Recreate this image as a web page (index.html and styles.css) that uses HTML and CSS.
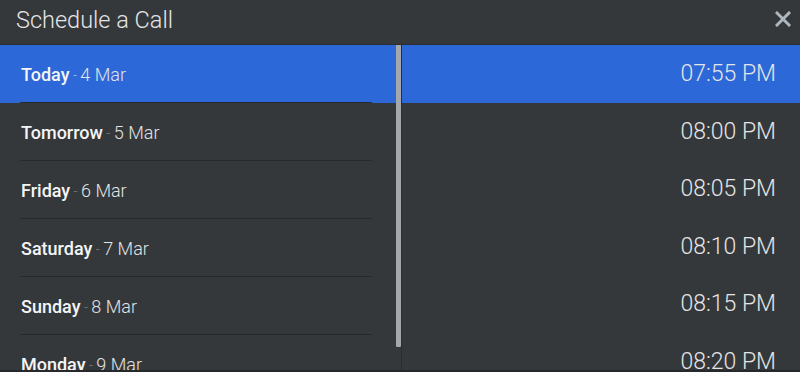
FILE: index.html
```html
<!DOCTYPE html>
<html>
<head>
<meta charset="utf-8">
<link rel="stylesheet" href="styles.css">
</head>
<body>
<div class="dialog">
  <header class="header">
    <h1 class="title">Schedule a Call</h1>
    <button class="close" aria-label="Close">
      <svg width="16" height="16" viewBox="0 0 16 16"><path d="M2 2 L14 14 M14 2 L2 14" stroke="#aeb6be" stroke-width="3" stroke-linecap="square"/></svg>
    </button>
  </header>
  <div class="body">
    <div class="days-pane">
      <ul class="days">
        <li class="day active"><div class="day-inner"><span class="dname">Today</span><span class="dash"> - </span><span class="ddate">4 Mar</span></div></li>
        <li class="day"><div class="day-inner"><span class="dname">Tomorrow</span><span class="dash"> - </span><span class="ddate">5 Mar</span></div></li>
        <li class="day"><div class="day-inner"><span class="dname">Friday</span><span class="dash"> - </span><span class="ddate">6 Mar</span></div></li>
        <li class="day"><div class="day-inner"><span class="dname">Saturday</span><span class="dash"> - </span><span class="ddate">7 Mar</span></div></li>
        <li class="day"><div class="day-inner"><span class="dname">Sunday</span><span class="dash"> - </span><span class="ddate">8 Mar</span></div></li>
        <li class="day"><div class="day-inner"><span class="dname">Monday</span><span class="dash"> - </span><span class="ddate">9 Mar</span></div></li>
      </ul>
      <div class="scrolltrack"><div class="scrollthumb"></div></div>
    </div>
    <ul class="times">
      <li class="time active">07:55 PM</li>
      <li class="time">08:00 PM</li>
      <li class="time">08:05 PM</li>
      <li class="time">08:10 PM</li>
      <li class="time">08:15 PM</li>
      <li class="time">08:20 PM</li>
      <li class="time">08:25 PM</li>
    </ul>
  </div>
</div>
</body>
</html>
```
FILE: styles.css
```css
* { box-sizing: border-box; }
html, body { margin: 0; padding: 0; }
body {
  width: 800px;
  height: 372px;
  overflow: hidden;
  background: #34383b;
  font-family: Roboto, "Liberation Sans", sans-serif;
  color: #e6e7e8;
}
.dialog {
  display: flex;
  flex-direction: column;
  height: 372px;
  border-bottom: 2px solid #26292b;
}
.header {
  height: 45px;
  flex: none;
  display: flex;
  align-items: center;
  justify-content: space-between;
  padding: 0 9px 0 16px;
  border-bottom: 1px solid #2a2d30;
}
.title {
  margin: 0 0 5px 0;
  font-size: 23.5px;
  font-weight: 300;
  color: #e4e5e6;
}
.close {
  background: none;
  border: 0;
  padding: 0;
  width: 16px;
  height: 16px;
  margin-bottom: 6px;
  display: flex;
}
.body {
  flex: 1;
  display: flex;
  min-height: 0;
}
ul { list-style: none; margin: 0; padding: 0; }
.days-pane {
  width: 401px;
  flex: none;
  display: flex;
  overflow: hidden;
}
.days {
  width: 396px;
  flex: none;
}
.scrolltrack {
  width: 5px;
  flex: none;
  background: #34383b;
}
.scrollthumb {
  height: 302px;
  background: #a4a7ab;
  border-radius: 0 0 1px 1px;
}
.day {
  height: 58px;
}
.day.active { background: #2c68d8; }
.day-inner {
  height: 58px;
  margin: 0 24px 0 20px;
  padding: 2px 0 0 1px;
  display: flex;
  align-items: center;
  border-bottom: 1px solid #27292c;
  font-size: 18px;
}
.dname { font-weight: 500; color: #f4f5f6; }
.dash { font-weight: 300; color: #7c8186; font-size: 14px; white-space: pre; }
.day.active .dash { color: #a8c0ee; }
.ddate { font-weight: 300; color: #e2e3e4; }
.times {
  flex: 1;
  overflow: hidden;
  border-left: 1px solid #2a2d30;
}
.time {
  height: 57.5px;
  display: flex;
  align-items: center;
  justify-content: flex-end;
  padding-right: 24px;
  font-size: 23px;
  font-weight: 300;
  color: #e4e5e6;
}
.time.active { background: #2c68d8; }
```
